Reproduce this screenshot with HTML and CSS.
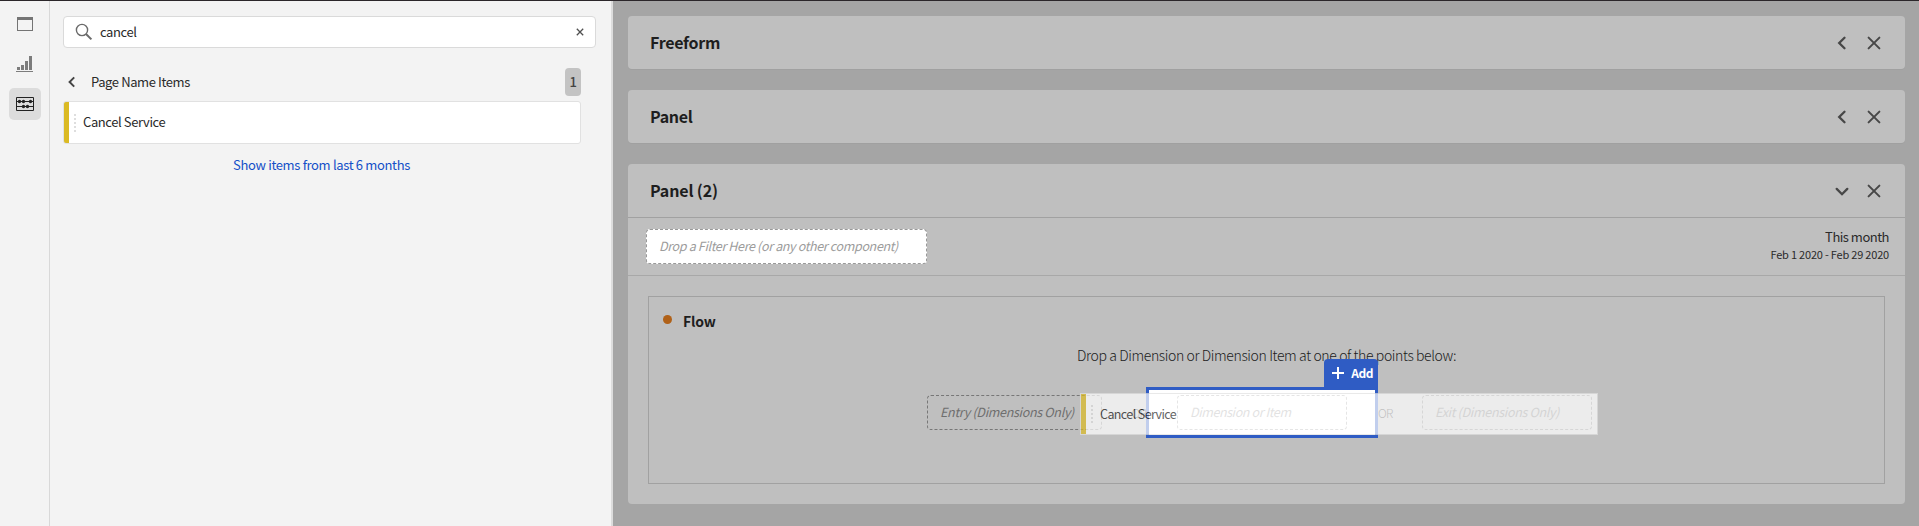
FILE: index.html
```html
<!DOCTYPE html>
<html lang="en">
<head>
<meta charset="utf-8">
<title>Workspace</title>
<link rel="stylesheet" href="styles.css">
</head>
<body>
<div class="app">
  <nav class="rail">
    <button class="rail-btn" aria-label="Panels"><svg width="18" height="16" viewBox="0 0 18 16"><rect x="1.5" y="1.5" width="15" height="13" fill="none" stroke="#747474"/><path d="M1 1h16v3H1z" fill="#747474"/></svg></button>
    <button class="rail-btn" aria-label="Visualizations"><svg width="18" height="18" viewBox="0 0 18 18"><path d="M0 16h17v1H0zM1 12h3v3H1zM5 10h3v5H5zM9 6h3v9H9zM13 1h3v14h-3z" fill="#7c7c7c"/></svg></button>
    <button class="rail-btn active" aria-label="Components"><svg width="18" height="14" viewBox="0 0 18 14"><path d="M.5.5h17v13H.5zM1 4.5h16M1 9.5h16" fill="none" stroke="#222"/><g fill="#222"><circle cx="3.5" cy="4.5" r="1.7"/><circle cx="7.5" cy="4.5" r="1.7"/><circle cx="14.5" cy="4.5" r="1.7"/><circle cx="7.5" cy="9.5" r="1.7"/><circle cx="11.5" cy="9.5" r="1.7"/></g></svg></button>
  </nav>
  <aside class="side">
    <div class="search">
      <svg width="18" height="18" viewBox="0 0 18 18" fill="none" stroke="#6a6a6a"><circle cx="7" cy="7" r="5.6" stroke-width="1.4"/><path d="M11 11l5.4 5.4" stroke-width="2"/></svg>
      <span class="query">cancel</span>
      <svg width="8" height="8" viewBox="0 0 8 8" stroke="#505050" stroke-width="1.3"><path d="M.8.8l6.4 6.4M7.2.8L.8 7.2"/></svg>
    </div>
    <div class="group">
      <svg width="8" height="12" viewBox="0 0 8 12" fill="none" stroke="#444" stroke-width="2"><path d="M7.2 1.4L2.6 6l4.6 4.6"/></svg>
      <span class="group-name">Page Name Items</span>
      <span class="count">1</span>
    </div>
    <div class="item"><i class="grip"></i><span class="item-name">Cancel Service</span></div>
    <a class="more">Show items from last 6 months</a>
  </aside>
  <main class="canvas">
    <section class="panel">
      <header class="panel-head"><h2>Freeform</h2><svg class="chev" width="12" height="14" viewBox="0 0 12 14"><path d="M8.5 1.7L3.2 7l5.3 5.3"/></svg><svg class="close" width="14" height="14" viewBox="0 0 14 14"><path d="M1.6 1.6l10.8 10.8M12.4 1.6L1.6 12.4"/></svg></header>
    </section>
    <section class="panel">
      <header class="panel-head"><h2>Panel</h2><svg class="chev" width="12" height="14" viewBox="0 0 12 14"><path d="M8.5 1.7L3.2 7l5.3 5.3"/></svg><svg class="close" width="14" height="14" viewBox="0 0 14 14"><path d="M1.6 1.6l10.8 10.8M12.4 1.6L1.6 12.4"/></svg></header>
    </section>
    <section class="panel open">
      <header class="panel-head"><h2>Panel (2)</h2><svg class="chev down" width="14" height="14" viewBox="0 0 14 14"><path d="M1.7 4.9L7 10.2l5.3-5.3"/></svg><svg class="close" width="14" height="14" viewBox="0 0 14 14"><path d="M1.6 1.6l10.8 10.8M12.4 1.6L1.6 12.4"/></svg></header>
      <div class="filters">
        <div class="filter-drop"><span>Drop a Filter Here (or any other component)</span></div>
        <div class="dates"><span class="range">This month</span><span class="days">Feb 1 2020 - Feb 29 2020</span></div>
      </div>
      <div class="flow">
        <div class="flow-head"><i class="dot"></i><h3>Flow</h3></div>
        <p class="hint"><span>Drop a Dimension or Dimension Item at one of the points below:</span></p>
        <div class="zones">
          <div class="zone entry"><span>Entry (Dimensions Only)</span></div>
          <span class="or">OR</span>
          <div class="target">
            <div class="add"><svg width="12" height="12" viewBox="0 0 12 12" stroke="#fff" stroke-width="2"><path d="M6 0v12M0 6h12"/></svg><span>Add</span></div>
            <div class="zone mid"><span>Dimension or Item</span></div>
          </div>
          <span class="or">OR</span>
          <div class="zone exit"><span>Exit (Dimensions Only)</span></div>
          <div class="ghost"><i class="grip"></i><span class="ghost-name">Cancel Service</span></div>
        </div>
      </div>
    </section>
  </main>
</div>
</body>
</html>
```

FILE: styles.css
```css
* { box-sizing: border-box; }
body { margin: 0; font: 13px/20px "Noto Sans CJK SC", "Noto Sans", sans-serif; letter-spacing: -.4px; color: #2a2a2a; overflow: hidden; }
h2, h3, p { margin: 0; }
svg { display: block; flex: none; }
span { white-space: nowrap; }
.app { display: flex; height: 526px; border-top: 1px solid #2b262a; background: #f3f3f3; }

.rail { width: 50px; flex: none; border-right: 1px solid #d8d8d8; padding: 7px 0 0 9px; display: flex; flex-direction: column; gap: 8px; }
.rail-btn { width: 32px; height: 32px; border: 0; padding: 0; background: none; border-radius: 5px; display: flex; align-items: center; justify-content: center; }
.rail-btn.active { background: #dcdcdc; }

.side { width: 563px; flex: none; border-right: 2px solid #dcdcdc; padding: 15px 15px 0 13px; }
.search { height: 32px; border: 1px solid #dadada; border-radius: 4px; background: #fff; display: flex; align-items: center; padding: 0 11px; }
.search .query { flex: 1; margin-left: 7px; padding-bottom: 1px; }
.group { height: 28px; margin: 20px 15px 0 0; padding-left: 4px; display: flex; align-items: center; }
.group-name { margin-left: 16px; flex: 1; }
.count { width: 16px; height: 28px; line-height: 28px; border-radius: 4px; background: #c3c3c3; color: #444; text-align: center; font-weight: 500; }
.item { height: 43px; margin: 5px 15px 0 0; border: 1px solid #e1e1e1; border-radius: 3px; background: linear-gradient(90deg, #dbba23 5px, #fff 5px); display: flex; align-items: center; padding-left: 10px; }
.grip { width: 2px; height: 18px; flex: none; background: repeating-linear-gradient(180deg, #dedede 0 2px, transparent 2px 4px); }
.item-name { margin-left: 7px; padding-bottom: 1px; }
.more { display: block; margin: 11px 16px 0 0; text-align: center; color: #1450c8; letter-spacing: -.34px; }

.canvas { flex: 1; background: #a5a5a5; padding: 15px 14px 0 15px; display: flex; flex-direction: column; gap: 21px; }
.panel { background: #bfbfbf; border-radius: 4px; box-shadow: 0 1px 0 #a0a0a0; }
.panel.open { height: 340px; box-shadow: none; }
.panel-head { height: 53px; display: flex; align-items: center; padding: 0 24px 0 22px; }
.panel-head h2 { flex: 1; font-size: 16px; color: #1e1e1e; line-height: 24px; padding-bottom: 1px; letter-spacing: -.3px; }
.panel.open h2 { letter-spacing: -.15px; }
.panel-head svg { fill: none; stroke: #474747; stroke-width: 2.3; stroke-linecap: round; }
.panel-head .chev { margin-right: 19px; }
.panel-head .down { margin-right: 18px; }
.panel-head .close { stroke-width: 2; }
.filters { height: 59px; border-top: 1px solid #a1a1a1; border-bottom: 1px solid #a8a8a8; display: flex; justify-content: space-between; padding: 11px 16px 0 18px; }
.filter-drop { width: 281px; height: 35px; border: 1px dashed #999; border-radius: 4px; background: #fff; color: #9c9c9c; font-size: 12.5px; font-style: italic; padding: 6px 0 0 12px; letter-spacing: -.35px; }
.dates { display: flex; flex-direction: column; align-items: flex-end; margin-top: -2px; }
.dates .range { line-height: 19px; letter-spacing: -.5px; }
.dates .days { font-size: 11px; line-height: 17px; letter-spacing: -.2px; }

.flow { margin: 20px 20px 0; height: 188px; border: 1px solid #a1a1a1; }
.flow-head { height: 48px; display: flex; padding: 14px 0 0 14px; }
.dot { width: 9px; height: 9px; margin-top: 4px; border-radius: 50%; background: #b06118; }
.flow-head h3 { margin-left: 11px; font-size: 14px; line-height: 20px; color: #1e1e1e; letter-spacing: -.2px; }
.hint { height: 20px; text-align: center; font-weight: 300; font-size: 14px; letter-spacing: -.38px; color: #1c1c1c; }
.zones { position: relative; display: flex; align-items: center; padding-left: 278px; margin-top: 22px; height: 51px; }
.zone { height: 35px; border: 1px dashed #777; border-radius: 4px; padding: 6px 0 0 12px; font-size: 12.5px; font-style: italic; color: #6e6e6e; flex: none; letter-spacing: -.3px; }
.entry { width: 175px; }
.mid { width: 170px; border-color: #aaa; color: #a0a0a0; letter-spacing: -.4px; }
.exit { width: 170px; margin-left: 31px; }
.or { width: 44px; text-align: right; font-weight: 300; font-size: 12px; letter-spacing: -.8px; }
.target { position: relative; width: 232px; height: 51px; flex: none; border: 3px solid #2f5cc4; background: #fff; padding: 5px 28px; }
.target + .or { text-align: left; width: 13px; }
.add { position: absolute; right: -3px; top: -31px; width: 54px; height: 31px; background: #2f5cc4; border-radius: 4px 4px 0 0; color: #fff; font-weight: 700; padding: 0 5px 3px 8px; display: flex; align-items: center; justify-content: space-between; font-size: 12px; letter-spacing: -.5px; }
.add span { padding-bottom: 1px; }
/* Dragged component, floating above the drop zones */
.ghost { position: absolute; left: 431px; top: 6px; width: 518px; height: 42px; opacity: .7; border: 1px solid #e1e1e1; background: linear-gradient(90deg, #dbba23 5px, #fff 5px); display: flex; align-items: center; padding-left: 10px; }
.ghost-name { margin-left: 7px; color: #222; font-size: 12.5px; letter-spacing: -.6px; }
```
